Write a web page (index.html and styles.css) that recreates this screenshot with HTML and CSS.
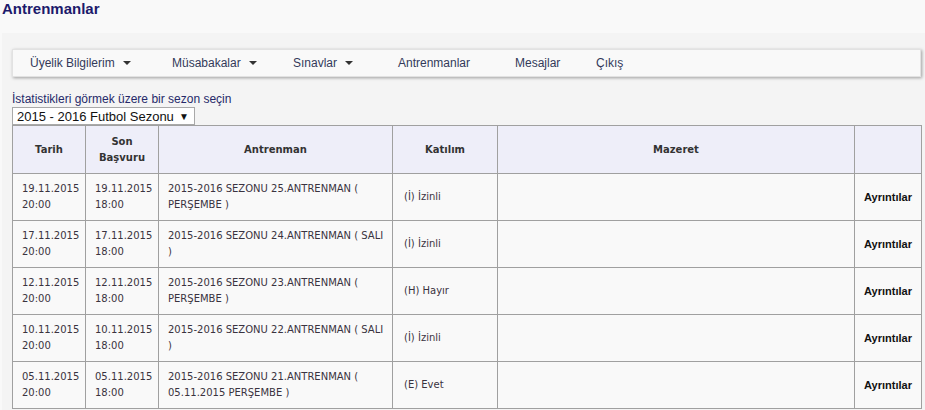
FILE: index.html
```html
<!DOCTYPE html>
<html lang="tr">
<head>
<meta charset="utf-8">
<title>Antrenmanlar</title>
<link rel="stylesheet" href="styles.css">
</head>
<body>
<h1 class="page-title">Antrenmanlar</h1>
<div class="main">
  <nav class="menu">
    <a class="menu-item has-caret w1">Üyelik Bilgilerim <span class="caret"></span></a>
    <a class="menu-item has-caret w2">Müsabakalar <span class="caret"></span></a>
    <a class="menu-item has-caret w3">Sınavlar <span class="caret"></span></a>
    <a class="menu-item w4">Antrenmanlar</a>
    <a class="menu-item w5">Mesajlar</a>
    <a class="menu-item w6">Çıkış</a>
  </nav>
  <div class="season-label">İstatistikleri görmek üzere bir sezon seçin</div>
  <div class="season-select"><span>2015 - 2016 Futbol Sezonu</span><span class="sel-arrow">▼</span></div>
  <table class="grid">
    <colgroup>
      <col class="c1"><col class="c2"><col class="c3"><col class="c4"><col class="c5"><col class="c6">
    </colgroup>
    <thead>
      <tr><th>Tarih</th><th>Son<br>Başvuru</th><th>Antrenman</th><th>Katılım</th><th>Mazeret</th><th></th></tr>
    </thead>
    <tbody>
      <tr><td>19.11.2015<br>20:00</td><td>19.11.2015<br>18:00</td><td>2015-2016 SEZONU 25.ANTRENMAN ( PERŞEMBE )</td><td class="kat">(İ) İzinli</td><td></td><td class="det">Ayrıntılar</td></tr>
      <tr><td>17.11.2015<br>20:00</td><td>17.11.2015<br>18:00</td><td>2015-2016 SEZONU 24.ANTRENMAN ( SALI )</td><td class="kat">(İ) İzinli</td><td></td><td class="det">Ayrıntılar</td></tr>
      <tr><td>12.11.2015<br>20:00</td><td>12.11.2015<br>18:00</td><td>2015-2016 SEZONU 23.ANTRENMAN ( PERŞEMBE )</td><td class="kat">(H) Hayır</td><td></td><td class="det">Ayrıntılar</td></tr>
      <tr><td>10.11.2015<br>20:00</td><td>10.11.2015<br>18:00</td><td>2015-2016 SEZONU 22.ANTRENMAN ( SALI )</td><td class="kat">(İ) İzinli</td><td></td><td class="det">Ayrıntılar</td></tr>
      <tr><td>05.11.2015<br>20:00</td><td>05.11.2015<br>18:00</td><td>2015-2016 SEZONU 21.ANTRENMAN ( 05.11.2015 PERŞEMBE )</td><td class="kat">(E) Evet</td><td></td><td class="det">Ayrıntılar</td></tr>
    </tbody>
  </table>
</div>
</body>
</html>
```
FILE: styles.css
```css
html, body {
  margin: 0;
  padding: 0;
  background: #f9f9f9;
}
body {
  font-family: "Liberation Sans", Arial, sans-serif;
  color: #333;
}
.page-title {
  margin: 0;
  height: 33px;
  box-sizing: border-box;
  padding: 0 0 0 2px;
  font: bold 15px/17px "Liberation Sans", Arial, sans-serif;
  color: #1c1a6b;
}
.main {
  margin-left: 2px;
  background: #f4f4f4;
  padding: 16px 4px 2px 10px;
}
.menu {
  display: flex;
  align-items: center;
  height: 28px;
  box-sizing: border-box;
  background: #f9f9f9;
  border: 1px solid #e2e2e2;
  box-shadow: 1px 1px 3px rgba(0,0,0,0.35);
  padding-left: 17px;
}
.menu-item {
  font-size: 12px;
  color: #333a5a;
  display: flex;
  align-items: center;
  white-space: nowrap;
}
.w1 { width: 142px; }
.w2 { width: 121px; }
.w3 { width: 105px; }
.w4 { width: 117px; }
.w5 { width: 81px; }
.caret {
  display: inline-block;
  width: 0;
  height: 0;
  margin-left: 8px;
  border-left: 4px solid transparent;
  border-right: 4px solid transparent;
  border-top: 4px solid #333;
}
.season-label {
  margin-top: 15px;
  font-size: 12px;
  line-height: 15px;
  color: #262a6a;
}
.season-select {
  width: 183px;
  height: 18px;
  box-sizing: border-box;
  border: 1px solid #a9a9a9;
  background: #fff;
  display: flex;
  align-items: center;
  justify-content: space-between;
  padding: 0 5px 0 4px;
  font-size: 13px;
  color: #111;
}
.sel-arrow {
  font-size: 10px;
  color: #111;
}
.grid {
  width: 909px;
  border-collapse: collapse;
  font-family: "DejaVu Sans", Verdana, sans-serif;
  font-size: 10px;
  color: #3a3340;
  table-layout: fixed;
}
.c1 { width: 73px; }
.c2 { width: 73px; }
.c3 { width: 234px; }
.c4 { width: 105px; }
.c5 { width: 357px; }
.c6 { width: 67px; }
.grid th, .grid td {
  border: 1px solid #a0a0a0;
}
.grid th {
  background: #eeeef9;
  height: 45px;
  font-weight: bold;
  font-size: 10px;
  line-height: 16px;
  color: #333;
  text-align: center;
}
.grid td {
  height: 46px;
  padding: 0 8px 0 9px;
  line-height: 16px;
  vertical-align: middle;
  background: #f9f9f9;
}
.grid td.kat {
  padding-left: 11px;
}
.grid td.det {
  padding: 0;
  text-align: center;
  font-family: "Liberation Sans", Arial, sans-serif;
  font-weight: bold;
  font-size: 11px;
  color: #111;
}
```
